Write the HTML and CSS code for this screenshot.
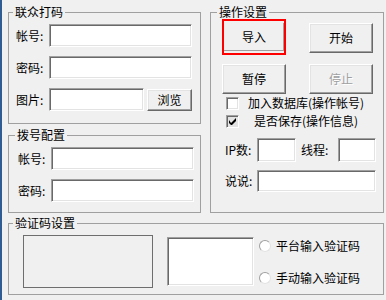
FILE: index.html
```html
<!DOCTYPE html>
<html lang="zh-CN">
  <head>
    <meta charset="UTF-8" />
    <title>打码设置</title>
    <link rel="stylesheet" href="styles.css">
  </head>
  <body>
    <div class="window">
      <div class="top">
        <div class="left-col">
          <!-- 联众打码 -->
          <fieldset class="group group-lz">
            <legend>联众打码</legend>
            <div class="group-body lz-body">
              <div class="form-row">
                <label>帐号:</label>
                <input type="text" class="field field-wide" />
              </div>
              <div class="form-row">
                <label>密码:</label>
                <input type="text" class="field field-wide" />
              </div>
              <div class="form-row">
                <label>图片:</label>
                <input type="text" class="field field-pic" />
                <button type="button" class="btn btn-browse">浏览</button>
              </div>
            </div>
          </fieldset>

          <!-- 拨号配置 -->
          <fieldset class="group group-dial">
            <legend>拨号配置</legend>
            <div class="group-body dial-body">
              <div class="form-row">
                <label>帐号:</label>
                <input type="text" class="field field-wide" />
              </div>
              <div class="form-row">
                <label>密码:</label>
                <input type="text" class="field field-wide" />
              </div>
            </div>
          </fieldset>
        </div>

        <!-- 操作设置 -->
        <fieldset class="group group-ops">
          <legend>操作设置</legend>
          <div class="group-body ops-body">
            <div class="btn-grid">
              <div class="btn-focus"><button type="button" class="btn btn-import">导入</button></div>
              <button type="button" class="btn">开始</button>
              <button type="button" class="btn">暂停</button>
              <button type="button" class="btn btn-disabled">停止</button>
            </div>

            <div class="check-row">
              <span class="checkbox"></span>
              <span class="check-text">加入数据库(操作帐号)</span>
            </div>
            <div class="check-row">
              <span class="checkbox checked">
                <svg width="7" height="7" viewBox="0 0 7 7"><path d="M0 2v3l2 2h1l4-4V0L2 5z" fill="#000"/></svg>
              </span>
              <span class="check-text check-text-2">是否保存(操作信息)</span>
            </div>

            <div class="ops-row ip-row">
              <label class="ip-label">IP数:</label>
              <input type="text" class="field field-small" />
              <label class="thread-label">线程:</label>
              <input type="text" class="field field-small field-thread" />
            </div>
            <div class="ops-row talk-row">
              <label class="ip-label">说说:</label>
              <input type="text" class="field field-talk" />
            </div>
          </div>
        </fieldset>
      </div>

      <!-- 验证码设置 -->
      <fieldset class="group group-captcha">
        <legend>验证码设置</legend>
        <div class="group-body captcha-body">
          <div class="captcha-image"></div>
          <div class="captcha-input"></div>
          <div class="radio-list">
            <div class="radio-row"><span class="radio"></span>平台输入验证码</div>
            <div class="radio-row"><span class="radio"></span>手动输入验证码</div>
          </div>
        </div>
      </fieldset>
    </div>
  </body>
</html>
```

FILE: styles.css
```css
body {
  margin: 0;
  height: 300px;
  box-sizing: border-box;
  overflow: hidden;
  background-color: #f0f0f0;
  border-left: 2px solid #2f5d93;
  font-family: "Noto Sans CJK SC", "DejaVu Sans", sans-serif;
  font-size: 12px;
  line-height: 16px;
  color: #000;
}

.window {
  padding: 4px 2px 0 6px;
}

.top {
  display: flex;
  gap: 9px;
}

.left-col {
  width: 193px;
  display: flex;
  flex-direction: column;
  gap: 3px;
}

/* Group boxes */
.group {
  margin: 0;
  padding: 0;
  min-width: 0;
  box-sizing: border-box;
  border: 1px solid #a0a0a0;
}

.group legend {
  margin-left: 4px;
  padding: 0 2px;
  line-height: 16px;
}

.group-lz {
  height: 120px;
}

.group-dial {
  height: 86px;
}

.group-dial legend {
  margin-left: 6px;
}

.group-ops {
  width: 174px;
  height: 209px;
}

.group-ops legend {
  margin-left: 6px;
}

.group-captcha {
  height: 80px;
  margin-top: 2px;
}

/* Form rows */
.form-row {
  display: flex;
  align-items: center;
}

.form-row label {
  width: 33px;
  flex: none;
}

.lz-body {
  display: grid;
  row-gap: 9px;
  padding: 4px 7px 0 7px;
}

.dial-body {
  display: grid;
  row-gap: 9px;
  padding: 4px 6px 0 9px;
}

/* Sunken edit box */
.field {
  box-sizing: border-box;
  height: 23px;
  margin: 0;
  padding: 0 2px;
  background: #fff;
  border: 1px solid;
  border-color: #a0a0a0 #fff #fff #a0a0a0;
  box-shadow: inset 1px 1px 0 #696969, inset -1px -1px 0 #e3e3e3;
  font: inherit;
}

.field-wide {
  width: 143px;
}

.field-pic {
  width: 95px;
}

/* Raised push button */
.btn {
  box-sizing: border-box;
  height: 30px;
  margin: 0;
  padding: 0;
  background: #f0f0f0;
  border: 1px solid;
  border-color: #fff #696969 #696969 #fff;
  box-shadow: inset -1px -1px 0 #a0a0a0, inset 1px 1px 0 #e3e3e3;
  font: inherit;
  color: #000;
}

.btn-browse {
  width: 45px;
  height: 22px;
  margin-left: 3px;
}

.btn-disabled {
  color: #a0a0a0;
  text-shadow: 1px 1px 0 #fff;
}

.btn-grid {
  display: grid;
  grid-template-columns: 64px 64px;
  column-gap: 23px;
  row-gap: 11px;
  padding: 3px 0 0 11px;
}

.btn-focus {
  margin: -4px 0 -2px;
  border: 2px solid #f00;
  padding: 2px 0;
  height: 36px;
  box-sizing: border-box;
  display: flex;
}

.btn-import {
  width: 100%;
  height: 100%;
  border: none;
  box-shadow: inset -1px -1px 0 #a0a0a0;
}

/* Checkboxes */
.check-row {
  display: flex;
  align-items: center;
  height: 18px;
  padding-left: 15px;
}

.check-row:first-of-type {
  margin-top: 11px;
}

.checkbox {
  box-sizing: border-box;
  width: 13px;
  height: 13px;
  flex: none;
  display: flex;
  align-items: center;
  justify-content: center;
  background: #fff;
  border: 1px solid;
  border-color: #a0a0a0 #fff #fff #a0a0a0;
  box-shadow: inset 1px 1px 0 #696969, inset -1px -1px 0 #e3e3e3;
}

.checkbox.checked {
  background: #e3e3e3;
}

.check-text {
  margin-left: 9px;
}

.check-text-2 {
  margin-left: 15px;
}

.ops-row {
  display: flex;
  align-items: center;
  padding-left: 14px;
}

.ip-row {
  margin-top: 8px;
}

.talk-row {
  margin-top: 8px;
}

.ip-label {
  width: 32px;
}

.thread-label {
  width: 37px;
  margin-left: 5px;
}

.field-small {
  width: 39px;
  height: 24px;
}

.field-thread {
  width: 38px;
}

.field-talk {
  width: 119px;
  height: 22px;
}

/* Captcha */
.captcha-body {
  display: flex;
  align-items: flex-start;
  padding-left: 14px;
}

.captcha-image {
  box-sizing: border-box;
  width: 130px;
  height: 53px;
  margin-top: 4px;
  border: 1px solid #6e6e6e;
}

.captcha-input {
  box-sizing: border-box;
  width: 87px;
  height: 49px;
  margin: 6px 0 0 14px;
  background: #fff;
  border: 1px solid;
  border-color: #a0a0a0 #fff #fff #a0a0a0;
  box-shadow: inset 1px 1px 0 #696969, inset -1px -1px 0 #e3e3e3;
}

.radio-list {
  display: flex;
  flex-direction: column;
  gap: 16px;
  margin: 7px 0 0 5px;
}

.radio-row {
  display: flex;
  align-items: center;
  height: 16px;
}

.radio {
  box-sizing: border-box;
  width: 12px;
  height: 12px;
  margin-right: 5px;
  border-radius: 50%;
  background: #fff;
  border: 1px solid;
  border-color: #a0a0a0 #e3e3e3 #e3e3e3 #a0a0a0;
}
```
